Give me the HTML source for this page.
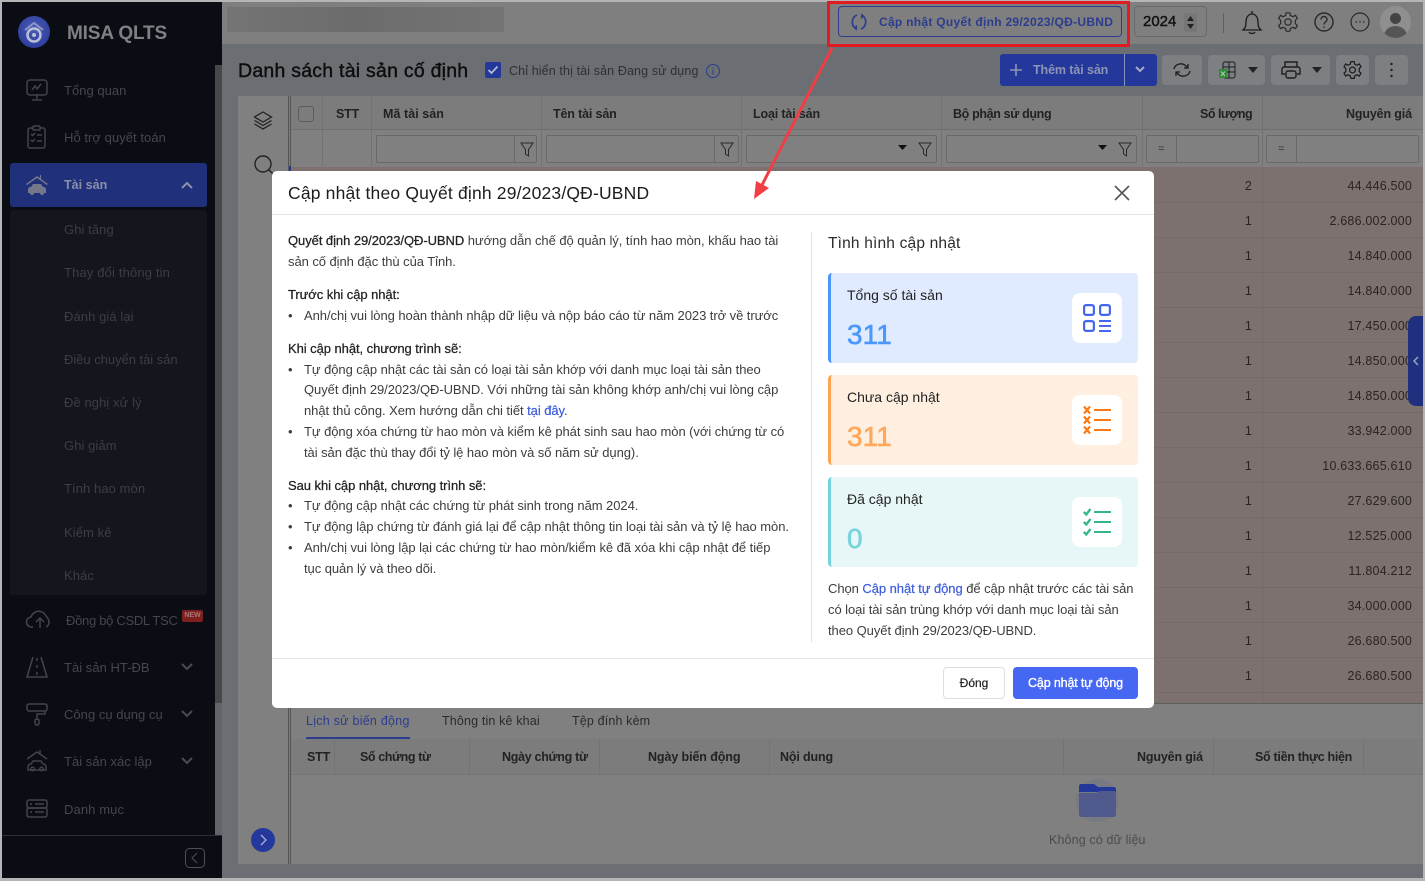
<!DOCTYPE html>
<html lang="vi"><head><meta charset="utf-8"><title>MISA QLTS</title>
<style>
html,body{margin:0;padding:0}
body{width:1425px;height:881px;overflow:hidden;position:relative;background:#b5b5b5;font-family:"Liberation Sans","Noto Sans CJK SC",sans-serif;font-size:13px;color:#222}
div,span.a,svg.a{position:absolute}
.t{position:absolute;white-space:nowrap;line-height:20px;height:20px}
.side{color:#45474c;font-size:13px;letter-spacing:.03px}
.sub{color:#3c3e44;font-size:13px;letter-spacing:.08px}
.b{font-weight:bold}
.h{color:#222;font-size:12.5px;font-weight:bold;letter-spacing:-.15px}
.r{text-align:right;color:#2a2424;font-size:12.5px;letter-spacing:.2px}
.m{font-size:13px;color:#3d3d3d;letter-spacing:-.06px}
.mb{color:#222;font-weight:normal;-webkit-text-stroke:.25px #222}
.inp{border:1px solid #696969;background:#808080;box-sizing:border-box;border-radius:2px}
.tb{background:#7d7f83;border-radius:4px;box-sizing:border-box}
.card{left:828px;width:310px;height:90px;border-radius:4px;box-sizing:border-box;border-left:3px solid}
.ib{left:1072px;width:50px;height:50px;background:#fff;border-radius:8px}
.ct{font-size:14px;color:#222}
.cn{font-size:28px;letter-spacing:.1px}
</style></head><body>

<!-- main background -->
<div style="left:2px;top:2px;width:1421px;height:876px;background:#6b6e72"></div>
<!-- top bar -->
<div style="left:222px;top:2px;width:1201px;height:42px;background:#7f7f7f"></div>
<div style="left:227px;top:7px;width:277px;height:25px;background:linear-gradient(90deg,#747474,#6c6c6c 45%,#747474)"></div>

<!-- sidebar -->
<div style="left:2px;top:2px;width:220px;height:876px;background:#0a0d14"></div>
<div style="left:215px;top:65px;width:7px;height:638px;background:#474849"></div>
<div style="left:215px;top:703px;width:7px;height:132px;background:#626468"></div>
<div style="left:2px;top:835px;width:220px;height:1px;background:#2c2f35"></div>
<div style="left:18px;top:16px;width:32px;height:32px;border-radius:50%;background:radial-gradient(circle at 50% 40%,#4a5cb0,#25349a)"></div>
<svg class="a" style="left:18px;top:16px" width="32" height="32" viewBox="0 0 32 32"><path d="M7 14 16 7l9 7" fill="none" stroke="#8d98c8" stroke-width="2"/><circle cx="16" cy="19" r="6.5" fill="none" stroke="#b9bfd8" stroke-width="2.5"/><circle cx="16" cy="19" r="2" fill="#b9bfd8"/></svg>
<div class="t" style="left:67px;top:24px;color:#7f8084;font-size:19px;letter-spacing:-.15px;font-weight:bold">MISA QLTS</div>

<svg class="a" style="left:25px;top:78px" width="24" height="24" viewBox="0 0 24 24" fill="none" stroke="#43454a" stroke-width="1.5"><rect x="2" y="2" width="20" height="15" rx="3"/><path d="M7 12l3-4 2 3 4-5M12 17v4M7 22h10"/></svg>
<div class="t side" style="left:64px;top:81px">Tổng quan</div>
<svg class="a" style="left:25px;top:125px" width="24" height="24" viewBox="0 0 24 24" fill="none" stroke="#43454a" stroke-width="1.5"><rect x="3" y="3" width="17" height="20" rx="2"/><rect x="8" y="1" width="7" height="4" rx="1" fill="#0a0d14"/><path d="M6 9l1.5 1.5L10 8M6 15l1.5 1.5L10 14M12 10h5M12 16h5"/></svg>
<div class="t side" style="left:64px;top:128px;letter-spacing:.05px">Hỗ trợ quyết toán</div>

<div style="left:10px;top:163px;width:197px;height:44px;background:#20307a;border-radius:3px"></div>
<svg class="a" style="left:25px;top:173px" width="24" height="24" viewBox="0 0 24 24" fill="#74788b"><path d="M1 11 12 3l3 2V2l1 0v4l7 5-1 1L12 5 2 12z"/><path d="M3 20v-3c0-2 1-3 3-3l2-3h8l2 3c2 0 3 1 3 3v3h-2a2 2 0 0 1-4 0H9a2 2 0 0 1-4 0z"/></svg>
<div class="t side b" style="left:64px;top:175px;color:#8c90a8;font-size:12.5px">Tài sản</div>
<svg class="a" style="left:180px;top:180px" width="14" height="10" viewBox="0 0 14 10" fill="none" stroke="#8c90a8" stroke-width="2"><path d="M2 8l5-5 5 5"/></svg>

<div style="left:10px;top:210px;width:197px;height:385px;background:#14161d;border-radius:3px"></div>
<div class="t sub" style="left:64px;top:220px">Ghi tăng</div>
<div class="t sub" style="left:64px;top:263px;letter-spacing:.15px">Thay đổi thông tin</div>
<div class="t sub" style="left:64px;top:307px">Đánh giá lại</div>
<div class="t sub" style="left:64px;top:350px;letter-spacing:-.03px">Điều chuyển tài sản</div>
<div class="t sub" style="left:64px;top:393px">Đề nghị xử lý</div>
<div class="t sub" style="left:64px;top:436px">Ghi giảm</div>
<div class="t sub" style="left:64px;top:479px">Tính hao mòn</div>
<div class="t sub" style="left:64px;top:523px">Kiểm kê</div>
<div class="t sub" style="left:64px;top:566px">Khác</div>

<svg class="a" style="left:25px;top:607px" width="26" height="24" viewBox="0 0 26 24" fill="none" stroke="#43454a" stroke-width="1.5"><path d="M8 20H7a5 5 0 0 1-1-10 8 8 0 0 1 15-1c2 2 3 4 3 6 0 2-1 4-3 5M15 21v-9M11 15l4-4 4 4"/></svg>
<div class="t side" style="left:66px;top:611px;letter-spacing:-.3px">Đồng bộ CSDL TSC</div>
<div class="t b" style="left:182px;top:610px;width:21px;height:12px;line-height:12px;background:#7e2020;color:#a77;font-size:7px;text-align:center;border-radius:2px">NEW</div>
<svg class="a" style="left:25px;top:655px" width="24" height="24" viewBox="0 0 24 24" fill="none" stroke="#43454a" stroke-width="1.5"><path d="M8 2 2 22h20L16 2M12 3v3M12 10v3M12 17v3"/></svg>
<div class="t side" style="left:64px;top:658px">Tài sản HT-ĐB</div>
<svg class="a" style="left:180px;top:662px" width="14" height="10" viewBox="0 0 14 10" fill="none" stroke="#4a4c52" stroke-width="2"><path d="M2 2l5 5 5-5"/></svg>
<svg class="a" style="left:25px;top:702px" width="24" height="24" viewBox="0 0 24 24" fill="none" stroke="#43454a" stroke-width="1.5"><rect x="2" y="2" width="20" height="7" rx="2"/><path d="M20 9v3H12v5"/><rect x="10" y="17" width="4" height="6" rx="2"/></svg>
<div class="t side" style="left:64px;top:705px">Công cụ dụng cụ</div>
<svg class="a" style="left:180px;top:709px" width="14" height="10" viewBox="0 0 14 10" fill="none" stroke="#4a4c52" stroke-width="2"><path d="M2 2l5 5 5-5"/></svg>
<svg class="a" style="left:25px;top:749px" width="24" height="24" viewBox="0 0 24 24" fill="none" stroke="#43454a" stroke-width="1.4"><path d="M2 10 12 3l3 2V1M12 3l10 7"/><path d="M3 21v-3c0-2 1-3 3-3l2-3h8l2 3c2 0 3 1 3 3v3z"/><circle cx="7.5" cy="20" r="1.8"/><circle cx="16.5" cy="20" r="1.8"/></svg>
<div class="t side" style="left:64px;top:752px">Tài sản xác lập</div>
<svg class="a" style="left:180px;top:756px" width="14" height="10" viewBox="0 0 14 10" fill="none" stroke="#4a4c52" stroke-width="2"><path d="M2 2l5 5 5-5"/></svg>
<svg class="a" style="left:25px;top:798px" width="24" height="22" viewBox="0 0 24 22" fill="none" stroke="#43454a" stroke-width="1.5"><rect x="2" y="2" width="20" height="8" rx="2"/><rect x="2" y="10" width="20" height="9" rx="2"/><path d="M5 6h2M10 6h9M5 14h2M10 14h9"/></svg>
<div class="t side" style="left:64px;top:800px;letter-spacing:.1px">Danh mục</div>
<svg class="a" style="left:184px;top:847px" width="22" height="22" viewBox="0 0 22 22" fill="none" stroke="#4e5056"><rect x="1.5" y="1.5" width="19" height="19" rx="4"/><path d="M13 6l-5 5 5 5"/></svg>

<!-- top-right header -->
<div style="left:838px;top:6px;width:284px;height:31px;border:1px solid #2c3c8e;border-radius:4px;box-sizing:border-box"></div>
<svg class="a" style="left:849px;top:11px" width="20" height="22" viewBox="0 0 20 22" fill="none" stroke="#2c3c8e" stroke-width="1.7"><path d="M8 4C3 6 2 12 5 16l2 2M12 18c5-2 6-8 3-12l-2-2M4 15l3 3 .5-3.5M16 7l-3-3-.5 3.5"/></svg>
<div class="t b" style="left:879px;top:12px;color:#2c3c8e;font-size:12px;letter-spacing:.29px">Cập nhật Quyết định 29/2023/QĐ-UBND</div>
<div style="left:1134px;top:6px;width:73px;height:31px;border:1px solid #6a6a6a;border-radius:4px;box-sizing:border-box"></div>
<div class="t" style="left:1143px;top:12px;font-size:15px;color:#111;-webkit-text-stroke:.4px #111">2024</div>
<div style="left:1184px;top:13px;width:13px;height:19px;background:#777"></div>
<svg class="a" style="left:1185px;top:15px" width="11" height="15" viewBox="0 0 11 15" fill="#222"><path d="M5.5 1 9 6H2zM5.5 14 2 9h7z"/></svg>
<div style="left:1223px;top:13px;width:1px;height:20px;background:#606060"></div>
<svg class="a" style="left:1240px;top:9px" width="24" height="26" viewBox="0 0 24 26" fill="none" stroke="#1c1c1c" stroke-width="1.3"><path d="M3 21c2-2 3-3 3-8 0-4 2-8 6-8s6 4 6 8c0 5 1 6 3 8zM12 2v3M9 23c1 2 5 2 6 0"/></svg>
<svg class="a" style="left:1277px;top:10px" width="22" height="24" viewBox="0 0 24 24" fill="none" stroke="#2a2a2a" stroke-width="1.3"><circle cx="12" cy="12" r="3.5"/><path d="M10 2h4l.7 3 2.8 1.2 2.7-1.5 2 3.4-2.2 2.1v3.6l2.2 2.1-2 3.4-2.7-1.5L14.7 19 14 22h-4l-.7-3-2.8-1.2-2.7 1.5-2-3.4 2.2-2.1V10.2L1.8 8.1l2-3.4 2.7 1.500L9.3 5z"/></svg>
<svg class="a" style="left:1313px;top:11px" width="22" height="22" viewBox="0 0 22 22" fill="none" stroke="#2a2a2a" stroke-width="1.4"><circle cx="11" cy="11" r="9"/><path d="M8 8.5c0-4 6-4 6 0 0 2.5-3 2.5-3 5M11 15.5v1.500"/></svg>
<svg class="a" style="left:1349px;top:11px" width="22" height="22" viewBox="0 0 22 22" fill="none" stroke="#2a2a2a" stroke-width="1.2"><circle cx="11" cy="11" r="9"/><path d="M6.5 11h1.5M10.3 11h1.5M14 11h1.5"/></svg>
<div style="left:1380px;top:6px;width:31px;height:32px;border-radius:50%;background:#8f8f8f;overflow:hidden"><div style="left:10px;top:7px;width:11px;height:11px;border-radius:50%;background:#444"></div><div style="left:4px;top:20px;width:23px;height:20px;border-radius:50%;background:#555"></div></div>

<!-- title row -->
<div class="t" style="left:238px;top:61px;color:#0d0d0d;font-size:19.5px;-webkit-text-stroke:.4px #0d0d0d;letter-spacing:.24px">Danh sách tài sản cố định</div>
<div style="left:485px;top:62px;width:16px;height:16px;background:#23389a;border-radius:2px"></div>
<svg class="a" style="left:485px;top:62px" width="16" height="16" viewBox="0 0 16 16" fill="none" stroke="#b5bbd2" stroke-width="1.8"><path d="M3.5 8l3 3 6-6.5"/></svg>
<div class="t" style="left:509px;top:61px;color:#2e3033;font-size:12.5px;letter-spacing:.12px">Chỉ hiển thị tài sản Đang sử dụng</div>
<svg class="a" style="left:705px;top:63px" width="16" height="16" viewBox="0 0 16 16" fill="none" stroke="#2c3f94" stroke-width="1"><circle cx="8" cy="8" r="6.5"/><path d="M8 7v4.500M8 4.500v1.200"/></svg>

<div style="left:1000px;top:54px;width:157px;height:32px;background:#23389a;border-radius:3px"></div>
<div style="left:1124px;top:54px;width:1px;height:32px;background:#8690b8"></div>
<svg class="a" style="left:1008px;top:62px" width="16" height="16" viewBox="0 0 16 16" stroke="#8d94b6" stroke-width="1.6"><path d="M8 2v12M2 8h12"/></svg>
<div class="t b" style="left:1033px;top:60px;color:#8d94b6;font-size:12.5px;letter-spacing:-.1px">Thêm tài sản</div>
<svg class="a" style="left:1134px;top:65px" width="12" height="10" viewBox="0 0 12 10" fill="none" stroke="#a5abc7" stroke-width="2"><path d="M2 2l4 4 4-4"/></svg>

<div class="tb" style="left:1162px;top:55px;width:40px;height:30px"></div>
<svg class="a" style="left:1172px;top:60px" width="20" height="20" viewBox="0 0 20 20" fill="none" stroke="#1e1e1e" stroke-width="1.3"><path d="M2 9c1-5 8-7 12-3l2 2M18 11c-1 5-8 7-12 3l-2-2M16 4v4h-4M4 16v-4h4"/></svg>
<div class="tb" style="left:1208px;top:55px;width:57px;height:30px"></div>
<svg class="a" style="left:1218px;top:61px" width="20" height="18" viewBox="0 0 20 18" fill="none" stroke="#1e1e1e"><rect x="5" y="1" width="12" height="16" rx="2"/><path d="M5 6h12M5 11h12M11 1v16"/><rect x="1" y="8" width="8" height="9" fill="#2e8b3a" stroke="none"/><path d="M3 10.5l4 4.5M7 10.5l-4 4.5" stroke="#b9c9b9"/></svg>
<svg class="a" style="left:1248px;top:67px" width="10" height="6"><path d="M0 0h10L5 6z" fill="#222"/></svg>
<div class="tb" style="left:1271px;top:55px;width:59px;height:30px"></div>
<svg class="a" style="left:1280px;top:60px" width="22" height="20" viewBox="0 0 22 20" fill="none" stroke="#1e1e1e" stroke-width="1.4"><path d="M5 7V2h12v5M5 14H2V9c0-1 1-2 2-2h14c1 0 2 1 2 2v5h-3"/><rect x="6" y="11" width="10" height="7" rx="2"/></svg>
<svg class="a" style="left:1312px;top:67px" width="10" height="6"><path d="M0 0h10L5 6z" fill="#222"/></svg>
<div class="tb" style="left:1336px;top:55px;width:33px;height:30px"></div>
<svg class="a" style="left:1342px;top:60px" width="21" height="20" viewBox="0 0 24 24" fill="none" stroke="#1e1e1e" stroke-width="1.5"><circle cx="12" cy="12" r="3.5"/><path d="M10 2h4l.7 3 2.8 1.2 2.7-1.5 2 3.4-2.2 2.1v3.6l2.2 2.1-2 3.4-2.7-1.5L14.7 19 14 22h-4l-.7-3-2.8-1.2-2.7 1.5-2-3.4 2.2-2.1V10.2L1.8 8.1l2-3.4 2.7 1.5L9.3 5z"/></svg>
<div class="tb" style="left:1375px;top:55px;width:33px;height:30px"></div>
<svg class="a" style="left:1389px;top:62px" width="5" height="16"><circle cx="2.5" cy="2" r="1.2" fill="#222"/><circle cx="2.5" cy="8" r="1.2" fill="#222"/><circle cx="2.5" cy="14" r="1.2" fill="#222"/></svg>

<!-- left rail -->
<div style="left:238px;top:96px;width:50px;height:768px;background:#808080"></div>
<div style="left:291px;top:96px;width:1132px;height:768px;background:#808080"></div>
<div style="left:288px;top:96px;width:3px;height:768px;background:#7c7c7c;border-left:1px solid #565656;border-right:1px solid #565656;box-sizing:border-box"></div>
<svg class="a" style="left:252px;top:110px" width="22" height="22" viewBox="0 0 22 22" fill="none" stroke="#222" stroke-width="1.3"><path d="M11 2 2.5 7 11 12l8.5-5zM2.5 10.5 11 15.5l8.5-5M2.5 14 11 19l8.5-5"/></svg>
<svg class="a" style="left:252px;top:153px" width="24" height="24" viewBox="0 0 24 24" fill="none" stroke="#222" stroke-width="1.4"><circle cx="11" cy="11" r="8"/><path d="M17 17l5 5"/></svg>
<div style="left:251px;top:828px;width:24px;height:24px;background:#23389a;border-radius:50%"></div>
<svg class="a" style="left:257px;top:834px" width="12" height="12" viewBox="0 0 12 12" fill="none" stroke="#aab0c9" stroke-width="1.3"><path d="M4 1l5 5-5 5"/></svg>

<!-- table header -->
<div style="left:291px;top:96px;width:1132px;height:34px;background:#7c7c7c;border-bottom:1px solid #6e6e6e;box-sizing:border-box"></div>
<div style="left:298px;top:106px;width:16px;height:16px;border:1px solid #5c5c5c;border-radius:3px;box-sizing:border-box"></div>
<div class="t h" style="left:336px;top:104px">STT</div>
<div class="t h" style="left:383px;top:104px;letter-spacing:.05px">Mã tài sản</div>
<div class="t h" style="left:553px;top:104px">Tên tài sản</div>
<div class="t h" style="left:753px;top:104px">Loại tài sản</div>
<div class="t h" style="left:953px;top:104px;letter-spacing:-.35px">Bộ phận sử dụng</div>
<div class="t h" style="left:1200px;top:104px;letter-spacing:-.5px">Số lượng</div>
<div class="t h" style="left:1346px;top:104px">Nguyên giá</div>
<div style="left:322px;top:96px;width:1px;height:70px;background:#727272"></div>
<div style="left:371px;top:96px;width:1px;height:70px;background:#727272"></div>
<div style="left:541px;top:96px;width:1px;height:70px;background:#727272"></div>
<div style="left:741px;top:96px;width:1px;height:70px;background:#727272"></div>
<div style="left:941px;top:96px;width:1px;height:70px;background:#727272"></div>
<div style="left:1142px;top:96px;width:1px;height:70px;background:#727272"></div>
<div style="left:1262px;top:96px;width:1px;height:70px;background:#727272"></div>

<!-- filters -->
<div class="inp" style="left:376px;top:135px;width:161px;height:28px"></div>
<div style="left:514px;top:135px;width:1px;height:28px;background:#696969"></div>
<div class="inp" style="left:546px;top:135px;width:193px;height:28px"></div>
<div style="left:714px;top:135px;width:1px;height:28px;background:#696969"></div>
<div class="inp" style="left:746px;top:135px;width:191px;height:28px"></div>
<div class="inp" style="left:946px;top:135px;width:191px;height:28px"></div>
<div class="inp" style="left:1146px;top:135px;width:113px;height:28px"></div>
<div style="left:1176px;top:135px;width:1px;height:28px;background:#696969"></div>
<div class="inp" style="left:1266px;top:135px;width:153px;height:28px"></div>
<div style="left:1296px;top:135px;width:1px;height:28px;background:#696969"></div>
<svg class="a" style="left:519px;top:141px" width="16" height="17" viewBox="0 0 16 17" fill="none" stroke="#2a2a2a"><path d="M2 2h12L9.5 8.5V15l-3-2V8.5z"/></svg>
<svg class="a" style="left:719px;top:141px" width="16" height="17" viewBox="0 0 16 17" fill="none" stroke="#2a2a2a"><path d="M2 2h12L9.5 8.5V15l-3-2V8.5z"/></svg>
<svg class="a" style="left:917px;top:141px" width="16" height="17" viewBox="0 0 16 17" fill="none" stroke="#2a2a2a"><path d="M2 2h12L9.5 8.5V15l-3-2V8.5z"/></svg>
<svg class="a" style="left:1117px;top:141px" width="16" height="17" viewBox="0 0 16 17" fill="none" stroke="#2a2a2a"><path d="M2 2h12L9.5 8.5V15l-3-2V8.5z"/></svg>
<svg class="a" style="left:898px;top:145px" width="9" height="5"><path d="M0 0h9L4.5 5z" fill="#111"/></svg>
<svg class="a" style="left:1098px;top:145px" width="9" height="5"><path d="M0 0h9L4.5 5z" fill="#111"/></svg>
<div class="t" style="left:1158px;top:139px;font-size:11px;color:#333">=</div>
<div class="t" style="left:1278px;top:139px;font-size:11px;color:#333">=</div>

<!-- rows background -->
<div style="left:291px;top:167px;width:1132px;height:536px;background:#7c716f"></div>
<div style="left:291px;top:168px;width:1132px;height:535px;background:repeating-linear-gradient(180deg,#7c716f 0,#7c716f 34px,#746b69 34px,#746b69 35px)"></div>
<div style="left:289px;top:166px;width:2px;height:10px;background:#23389a"></div>
<div style="left:1262px;top:167px;width:1px;height:536px;background:#746b69"></div>
<div style="left:291px;top:703px;width:1132px;height:1px;background:#5f5f5f"></div>

<div class="t r" style="left:1232px;top:176px;width:20px">2</div>
<div class="t r" style="left:1232px;top:211px;width:20px">1</div>
<div class="t r" style="left:1232px;top:246px;width:20px">1</div>
<div class="t r" style="left:1232px;top:281px;width:20px">1</div>
<div class="t r" style="left:1232px;top:316px;width:20px">1</div>
<div class="t r" style="left:1232px;top:351px;width:20px">1</div>
<div class="t r" style="left:1232px;top:386px;width:20px">1</div>
<div class="t r" style="left:1232px;top:421px;width:20px">1</div>
<div class="t r" style="left:1232px;top:456px;width:20px">1</div>
<div class="t r" style="left:1232px;top:491px;width:20px">1</div>
<div class="t r" style="left:1232px;top:526px;width:20px">1</div>
<div class="t r" style="left:1232px;top:561px;width:20px">1</div>
<div class="t r" style="left:1232px;top:596px;width:20px">1</div>
<div class="t r" style="left:1232px;top:631px;width:20px">1</div>
<div class="t r" style="left:1232px;top:666px;width:20px">1</div>
<div class="t r" style="left:1272px;top:176px;width:140px">44.446.500</div>
<div class="t r" style="left:1272px;top:211px;width:140px">2.686.002.000</div>
<div class="t r" style="left:1272px;top:246px;width:140px">14.840.000</div>
<div class="t r" style="left:1272px;top:281px;width:140px">14.840.000</div>
<div class="t r" style="left:1272px;top:316px;width:140px">17.450.000</div>
<div class="t r" style="left:1272px;top:351px;width:140px">14.850.000</div>
<div class="t r" style="left:1272px;top:386px;width:140px">14.850.000</div>
<div class="t r" style="left:1272px;top:421px;width:140px">33.942.000</div>
<div class="t r" style="left:1272px;top:456px;width:140px">10.633.665.610</div>
<div class="t r" style="left:1272px;top:491px;width:140px">27.629.600</div>
<div class="t r" style="left:1272px;top:526px;width:140px">12.525.000</div>
<div class="t r" style="left:1272px;top:561px;width:140px">11.804.212</div>
<div class="t r" style="left:1272px;top:596px;width:140px">34.000.000</div>
<div class="t r" style="left:1272px;top:631px;width:140px">26.680.500</div>
<div class="t r" style="left:1272px;top:666px;width:140px">26.680.500</div>
<div style="left:1408px;top:316px;width:15px;height:90px;background:#20307f;border-radius:8px 0 0 8px"></div>
<svg class="a" style="left:1412px;top:355px" width="8" height="12" viewBox="0 0 8 12" fill="none" stroke="#9aa0c0" stroke-width="1.5"><path d="M6 2 2 6l4 4"/></svg>

<!-- bottom tabs -->
<div class="t" style="left:306px;top:711px;color:#2c3d90;font-size:12.5px;letter-spacing:.25px">Lịch sử biến động</div>
<div style="left:306px;top:737px;width:104px;height:2px;background:#2c3d90"></div>
<div class="t" style="left:442px;top:711px;color:#2b2b2b;font-size:12.5px;letter-spacing:.15px">Thông tin kê khai</div>
<div class="t" style="left:572px;top:711px;color:#2b2b2b;font-size:12.5px;letter-spacing:.15px">Tệp đính kèm</div>
<div style="left:291px;top:739px;width:1132px;height:36px;background:#7c7c7c;border-bottom:1px solid #747474;box-sizing:border-box"></div>
<div class="t h" style="left:307px;top:747px">STT</div>
<div class="t h" style="left:360px;top:747px;letter-spacing:-.4px">Số chứng từ</div>
<div class="t h" style="left:502px;top:747px;letter-spacing:-.3px">Ngày chứng từ</div>
<div class="t h" style="left:648px;top:747px;letter-spacing:-.1px">Ngày biến động</div>
<div class="t h" style="left:780px;top:747px">Nội dung</div>
<div class="t h" style="left:1137px;top:747px">Nguyên giá</div>
<div class="t h" style="left:1255px;top:747px;letter-spacing:-.3px">Số tiền thực hiện</div>
<div style="left:334px;top:739px;width:1px;height:36px;background:#747474"></div>
<div style="left:469px;top:739px;width:1px;height:36px;background:#747474"></div>
<div style="left:599px;top:739px;width:1px;height:36px;background:#747474"></div>
<div style="left:769px;top:739px;width:1px;height:36px;background:#747474"></div>
<div style="left:1063px;top:739px;width:1px;height:36px;background:#747474"></div>
<div style="left:1213px;top:739px;width:1px;height:36px;background:#747474"></div>
<div style="left:1363px;top:739px;width:1px;height:36px;background:#747474"></div>
<div style="left:1076px;top:779px;width:43px;height:43px;border-radius:50%;background:#777a83"></div>
<svg class="a" style="left:1079px;top:784px" width="37" height="33" viewBox="0 0 37 33"><path d="M0 2C0 1 1 0 2 0h13l4 3h16c1 0 2 1 2 2v3H0z" fill="#23389a"/><path d="M0 9h17l4-2h14c1 0 2 1 2 2v22c0 1-1 2-2 2H2c-1 0-2-1-2-2z" fill="#515a8d"/></svg>
<div class="t" style="left:1049px;top:830px;color:#4b4b4f;font-size:12.5px;letter-spacing:.13px">Không có dữ liệu</div>

<!-- modal -->
<div style="left:272px;top:171px;width:882px;height:537px;background:#fff;border-radius:5px"></div>
<div class="t" style="left:288px;top:183px;font-size:17.5px;color:#1c1c1c;letter-spacing:.18px">Cập nhật theo Quyết định 29/2023/QĐ-UBND</div>
<svg class="a" style="left:1113px;top:184px" width="18" height="18" viewBox="0 0 18 18" stroke="#555" stroke-width="1.6"><path d="M2 2l14 14M16 2 2 16"/></svg>
<div style="left:272px;top:214px;width:882px;height:1px;background:#e2e4e8"></div>
<div style="left:811px;top:232px;width:1px;height:410px;background:#dfe1e6"></div>
<div style="left:272px;top:658px;width:882px;height:1px;background:#dfe3ea"></div>

<div class="t m" style="left:288px;top:231px"><span class="mb">Quyết định 29/2023/QĐ-UBND</span> hướng dẫn chế độ quản lý, tính hao mòn, khấu hao tài</div>
<div class="t m" style="left:288px;top:252px">sản cố định đặc thù của Tỉnh.</div>
<div class="t m mb" style="left:288px;top:285px">Trước khi cập nhật:</div>
<div class="t m" style="left:288px;top:306px">•</div>
<div class="t m" style="left:304px;top:306px">Anh/chị vui lòng hoàn thành nhập dữ liệu và nộp báo cáo từ năm 2023 trở về trước</div>
<div class="t m mb" style="left:288px;top:339px">Khi cập nhật, chương trình sẽ:</div>
<div class="t m" style="left:288px;top:360px">•</div>
<div class="t m" style="left:304px;top:360px">Tự động cập nhật các tài sản có loại tài sản khớp với danh mục loại tài sản theo</div>
<div class="t m" style="left:304px;top:380px">Quyết định 29/2023/QĐ-UBND. Với những tài sản không khớp anh/chị vui lòng cập</div>
<div class="t m" style="left:304px;top:401px">nhật thủ công. Xem hướng dẫn chi tiết <span style="color:#3b5bdb;-webkit-text-stroke:.2px #3b5bdb">tại đây</span>.</div>
<div class="t m" style="left:288px;top:422px">•</div>
<div class="t m" style="left:304px;top:422px">Tự động xóa chứng từ hao mòn và kiểm kê phát sinh sau hao mòn (với chứng từ có</div>
<div class="t m" style="left:304px;top:443px">tài sản đặc thù thay đổi tỷ lệ hao mòn và số năm sử dụng).</div>
<div class="t m mb" style="left:288px;top:476px">Sau khi cập nhật, chương trình sẽ:</div>
<div class="t m" style="left:288px;top:496px">•</div>
<div class="t m" style="left:304px;top:496px">Tự động cập nhật các chứng từ phát sinh trong năm 2024.</div>
<div class="t m" style="left:288px;top:517px">•</div>
<div class="t m" style="left:304px;top:517px">Tự động lập chứng từ đánh giá lại để cập nhật thông tin loại tài sản và tỷ lệ hao mòn.</div>
<div class="t m" style="left:288px;top:538px">•</div>
<div class="t m" style="left:304px;top:538px">Anh/chị vui lòng lập lại các chứng từ hao mòn/kiểm kê đã xóa khi cập nhật để tiếp</div>
<div class="t m" style="left:304px;top:559px">tục quản lý và theo dõi.</div>

<div class="t" style="left:828px;top:234px;font-size:15.5px;color:#2b2b2b;letter-spacing:.18px">Tình hình cập nhật</div>

<div class="card" style="top:273px;background:#e0ebff;border-color:#4a96fb"></div>
<div class="t ct" style="left:847px;top:285px">Tổng số tài sản</div>
<div class="t cn" style="left:847px;top:325px;color:#4c97fb;-webkit-text-stroke:.6px #4c97fb">311</div>
<div class="ib" style="top:293px"></div>
<svg class="a" style="left:1083px;top:304px" width="28" height="28" viewBox="0 0 28 28" fill="none" stroke="#4567ee" stroke-width="2.2"><rect x="1.100" y="1.100" width="9.800" height="9.800" rx="2"/><rect x="17.100" y="1.100" width="9.800" height="9.800" rx="2"/><rect x="1.100" y="17.100" width="9.800" height="9.800" rx="2"/><path d="M16 17h12M16 22h12M16 27h12" stroke-width="2"/></svg>

<div class="card" style="top:375px;background:#ffefe0;border-color:#ffa452"></div>
<div class="t ct" style="left:847px;top:387px">Chưa cập nhật</div>
<div class="t cn" style="left:847px;top:427px;color:#ffa75a;-webkit-text-stroke:.6px #ffa75a">311</div>
<div class="ib" style="top:395px"></div>
<svg class="a" style="left:1083px;top:405px" width="28" height="30" viewBox="0 0 28 30" fill="none" stroke="#fb7a15" stroke-width="2.2"><path d="M1 1.500l6 7M7 1.500l-6 7M1 11.500l6 7M7 11.500l-6 7M1 21.500l6 7M7 21.500l-6 7"/><path d="M11 5h17M11 15h17M11 25h17" stroke-width="2"/></svg>

<div class="card" style="top:477px;background:#e7f7f8;border-color:#75d4dd"></div>
<div class="t ct" style="left:847px;top:489px">Đã cập nhật</div>
<div class="t cn" style="left:847px;top:529px;color:#75d4dd;-webkit-text-stroke:.6px #75d4dd">0</div>
<div class="ib" style="top:497px"></div>
<svg class="a" style="left:1083px;top:507px" width="28" height="30" viewBox="0 0 28 30" fill="none" stroke="#34b58e" stroke-width="2.3"><path d="M.8 5l2.500 2.500L7.500 2M.8 15l2.500 2.500L7.500 12M.8 25l2.500 2.500L7.500 22"/><path d="M11 5h17M11 15h17M11 25h17" stroke-width="2"/></svg>

<div class="t m" style="left:828px;top:579px">Chọn <span style="color:#3b5bdb;-webkit-text-stroke:.2px #3b5bdb">Cập nhật tự động</span> để cập nhật trước các tài sản</div>
<div class="t m" style="left:828px;top:600px">có loại tài sản trùng khớp với danh mục loại tài sản</div>
<div class="t m" style="left:828px;top:621px">theo Quyết định 29/2023/QĐ-UBND.</div>

<div style="left:943px;top:667px;width:62px;height:32px;background:#fff;border:1px solid #dcdfe6;border-radius:4px;box-sizing:border-box"></div>
<div class="t" style="left:943px;top:673px;width:62px;text-align:center;font-size:12px;color:#222;-webkit-text-stroke:.2px #222">Đóng</div>
<div style="left:1013px;top:667px;width:125px;height:32px;background:#4567f2;border-radius:4px"></div>
<div class="t" style="left:1013px;top:673px;width:125px;text-align:center;font-size:12.5px;color:#fff;-webkit-text-stroke:.35px #fff;letter-spacing:-.15px">Cập nhật tự động</div>

<!-- annotation -->
<svg class="a" style="left:0;top:0" width="1425" height="881" viewBox="0 0 1425 881" fill="none">
<rect x="828.500" y="2.500" width="300" height="43" stroke="#e01b22" stroke-width="3"/>
<path d="M832 48 761 187" stroke="#f03e44" stroke-width="3"/>
<path d="M754 199 756 181 769 188z" fill="#f03e44"/>
</svg>
</body></html>
